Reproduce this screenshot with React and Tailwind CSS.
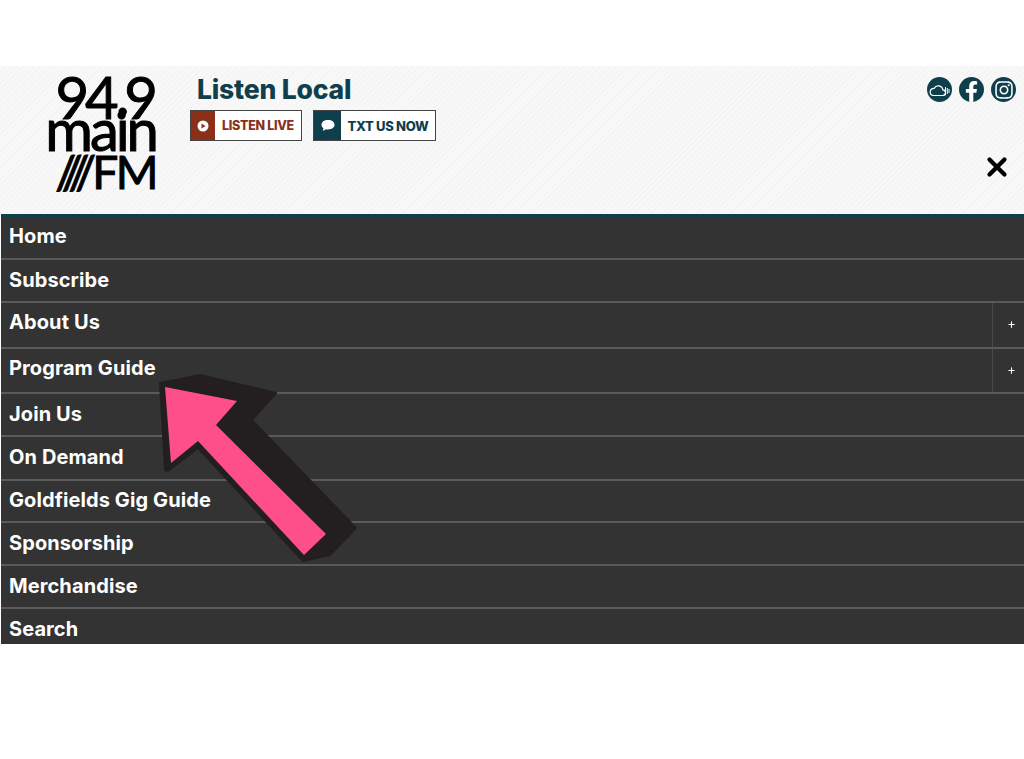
import { X, Plus } from 'lucide-react'
import { FaFacebookF, FaInstagram } from 'react-icons/fa'

const FONT = 'font-["Inter","Noto_Sans",sans-serif]'

const menu = [
  { label: 'Home', h: 'h-[43px]', pad: 'pb-[3px]' },
  { label: 'Subscribe', h: 'h-[43px]', pad: 'pb-[2px]' },
  { label: 'About Us', h: 'h-[46px]', more: true, pad: 'pb-[6px]' },
  { label: 'Program Guide', h: 'h-[45px]', more: true, pad: 'pb-[5px]' },
  { label: 'Join Us', h: 'h-[43px]', pad: 'pb-[2px]' },
  { label: 'On Demand', h: 'h-[44px]', pad: 'pb-[2px]' },
  { label: 'Goldfields Gig Guide', h: 'h-[42px]', pad: 'pb-[2px]' },
  { label: 'Sponsorship', h: 'h-[43px]', pad: 'pb-[2px]' },
  { label: 'Merchandise', h: 'h-[43px]', pad: 'pb-[1px]' },
  { label: 'Search', h: 'h-[36px]', last: true, pad: 'pt-[4px]' },
]

function Logo() {
  return (
    <div className='w-[189px] pt-[8px] flex flex-col items-end pr-[33px] font-["Lato",sans-serif] text-black [-webkit-text-stroke:1px_black]'>
      <div className="mr-[2px] text-[58px] leading-[46px] tracking-[-4px]">94.9</div>
      <div className="text-[58px] leading-[18px] tracking-[-3px]">main</div>
      <div className="text-[46px] leading-[67px] tracking-[-2.5px]">
        <span className="tracking-[-3.8px]">////</span>FM
      </div>
    </div>
  )
}

function ActionButton({ label, color, textColor, width, iconWidth, textSize, children }) {
  return (
    <div className={`h-[31px] flex items-stretch bg-white border border-[#444] ${width}`}>
      <div className={`flex items-center justify-center ${color} ${iconWidth}`}>
        {children}
      </div>
      <span className={`flex-1 pt-[2px] flex items-center justify-center font-extrabold tracking-[-0.3px] ${textSize} ${textColor}`}>{label}</span>
    </div>
  )
}

function SocialIcons() {
  return (
    <div className="flex gap-[7px]">
      <div className="w-[25px] h-[25px] rounded-full bg-[#0f3f4c] flex items-center justify-center">
        <svg width="21" height="14" viewBox="0 0 21 14" fill="none" stroke="white" strokeWidth="1.2">
          <path d="M4 12.5h9.5a2.8 2.8 0 0 0 .3-5.6 4.6 4.6 0 0 0-8.7-1.5A3.6 3.6 0 0 0 4 12.5z" />
          <path d="M16.5 4v8M18.3 5v6M20 6v4" strokeWidth="1" />
        </svg>
      </div>
      <div className="w-[25px] h-[25px] rounded-full bg-[#0f3f4c] flex items-end justify-center overflow-hidden">
        <FaFacebookF className="text-white w-[15px] h-[21px]" />
      </div>
      <div className="w-[25px] h-[25px] rounded-full bg-[#0f3f4c] flex items-center justify-center">
        <FaInstagram className="text-white w-[20px] h-[20px]" />
      </div>
    </div>
  )
}

function Arrow() {
  return (
    <svg className="absolute left-[150px] top-[365px] pointer-events-none" width="215" height="205" viewBox="150 365 215 205">
      <polygon
        fill="#231f20"
        stroke="#231f20"
        strokeWidth="2"
        strokeLinejoin="round"
        points="160,383 200,375 276,393 252,420 356,528 330,555 303,561 198,448 168,471 165,470"
      />
      <polygon fill="#ff4f8b" points="165,387 237,401 216,425 326,534 304,555 198,441 171,463" />
    </svg>
  )
}

export default function App() {
  return (
    <div className={`relative w-[1024px] h-[759px] bg-white overflow-hidden pt-[66px] ${FONT}`}>
      <header className="h-[148px] flex bg-[#f7f7f7] bg-[repeating-linear-gradient(135deg,#f3f3f3_0px,#f3f3f3_1px,#f8f8f8_1px,#f8f8f8_4px)]">
        <Logo />
        <div className="pl-[1px] pt-[7px]">
          <h1 className="ml-[7px] text-[26.5px] leading-[32px] font-extrabold tracking-[-0.2px] text-[#0f3f4c]">Listen Local</h1>
          <div className="mt-[5px] flex gap-[11px]">
            <ActionButton label="LISTEN LIVE" color="bg-[#8a2f1a]" textColor="text-[#8a2f1a]" width="w-[112px]" iconWidth="w-[24px]" textSize="text-[12.5px]">
              <svg width="12" height="12" viewBox="0 0 12 12">
                <circle cx="6" cy="6" r="5.500" fill="white" />
                <polygon points="4.500,3.500 8.500,6 4.500,8.500" fill="#8a2f1a" />
              </svg>
            </ActionButton>
            <ActionButton label="TXT US NOW" color="bg-[#0f3f4c]" textColor="text-[#0f3f4c]" width="w-[123px]" iconWidth="w-[27px]" textSize="text-[13px]">
              <svg width="16" height="14" viewBox="0 0 16 14">
                <path d="M8 1C4 1 1.500 3 1.500 5.700c0 1.500.8 2.800 2 3.600L2.800 12l3.200-1.800c.6.100 1.300.2 2 .2 4 0 6.500-2 6.500-4.700S12 1 8 1z" fill="white" />
              </svg>
            </ActionButton>
          </div>
        </div>
        <div className="ml-auto pr-[8px] pt-[11px] flex flex-col items-end">
          <SocialIcons />
          <X className="mt-[50px] mr-[4px] w-[30px] h-[30px] text-black" strokeWidth={3.4} />
        </div>
      </header>

      <nav className="ml-[1px] h-[430px] overflow-hidden bg-[#333333] border-t-[3px] border-[#0f3f4c]">
        {menu.map(item => (
          <div
            key={item.label}
            className={`flex items-stretch ${item.h} ${item.last ? '' : 'border-b-2 border-[#5a5a5a]'}`}
          >
            <span className={`flex-1 pl-[8px] flex items-center text-[20px] font-bold tracking-[0.1px] text-white ${item.pad || ''}`}>{item.label}</span>
            {item.more && (
              <span className="w-[32px] pl-[6px] pb-[1px] flex items-center justify-center border-l border-[#4a4a4a]">
                <Plus className="w-[9px] h-[9px] text-white" strokeWidth={3} />
              </span>
            )}
          </div>
        ))}
      </nav>

      <Arrow />
    </div>
  )
}
